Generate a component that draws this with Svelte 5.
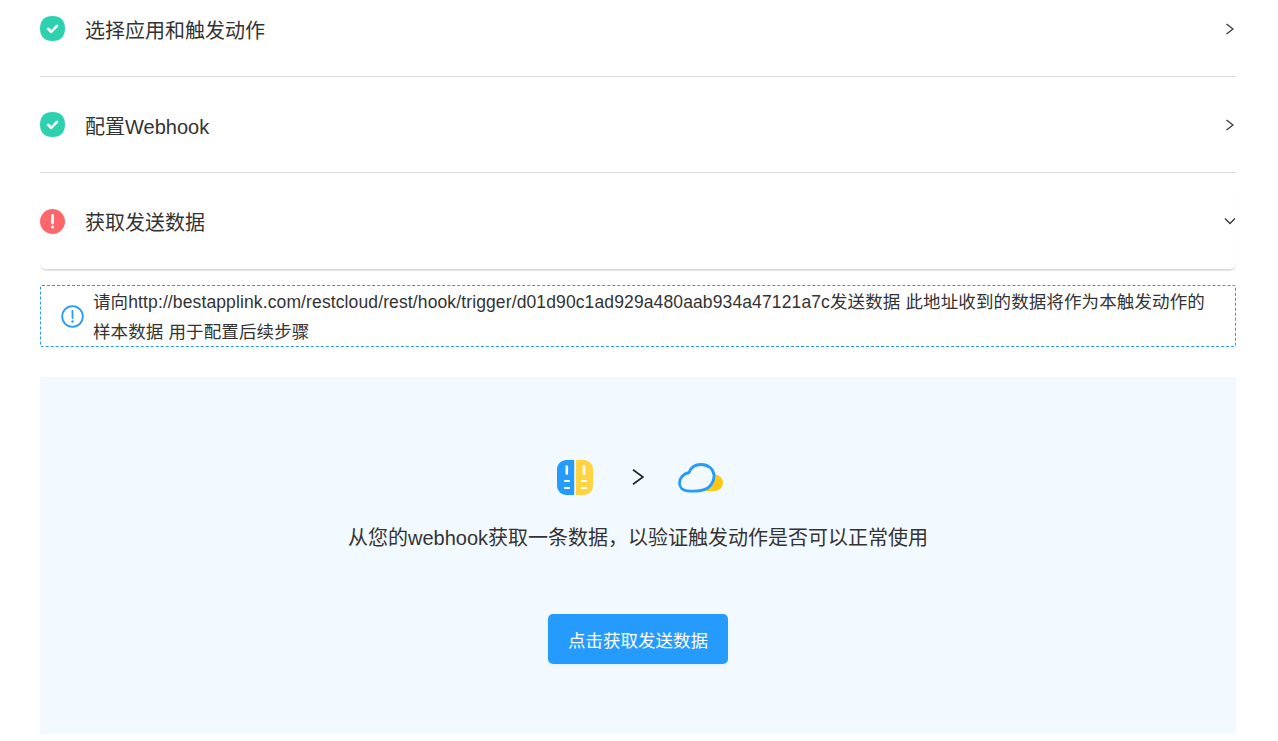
<script>
  const steps = [
    { title: "选择应用和触发动作", state: "ok", open: false },
    { title: "配置Webhook", state: "ok", open: false },
    { title: "获取发送数据", state: "err", open: true }
  ]
</script>

<div class="page">
  {#each steps as step}
    <div class="step" class:open={step.open}>
      {#if step.state === "ok"}
        <svg class="status" width="25" height="25" viewBox="0 0 25 25">
          <path d="M12.500 0C20.500 0 25 4.500 25 12.500S20.500 25 12.500 25 0 20.500 0 12.500 4.500 0 12.500 0z" fill="#2dd1ae" />
          <path d="M8 12.800l3.200 3 5.800-6" fill="none" stroke="#fff" stroke-width="2.600" stroke-linecap="round" stroke-linejoin="round" />
        </svg>
      {:else}
        <svg class="status" width="25" height="25" viewBox="0 0 25 25">
          <circle cx="12.500" cy="12.500" r="12.500" fill="#ff666b" />
          <path d="M12.500 6.500v7.500" stroke="#fff" stroke-width="2.800" stroke-linecap="round" />
          <circle cx="12.500" cy="18" r="1.600" fill="#fff" />
        </svg>
      {/if}
      <span class="title">{step.title}</span>
      <svg class="arrow" width="12" height="12" viewBox="0 0 12 12">
        {#if step.open}
          <path d="M1 3.500l5 5 5-5" fill="none" stroke="#333" stroke-width="1.300" />
        {:else}
          <path d="M2.500 1l6.500 5-6.500 5" fill="none" stroke="#333" stroke-width="1.200" />
        {/if}
      </svg>
    </div>
  {/each}

  <div class="notice">
    <svg class="notice-icon" width="23" height="23" viewBox="0 0 23 23">
      <circle cx="11.500" cy="11.500" r="10.300" fill="none" stroke="#259bfd" stroke-width="1.800" />
      <path d="M11.500 6v7" stroke="#259bfd" stroke-width="1.800" stroke-linecap="round" />
      <circle cx="11.500" cy="16.500" r="1.200" fill="#259bfd" />
    </svg>
    <p>请向http://bestapplink.com/restcloud/rest/hook/trigger/d01d90c1ad929a480aab934a47121a7c发送数据 此地址收到的数据将作为本触发动作的样本数据 用于配置后续步骤</p>
  </div>

  <div class="panel">
    <div class="logos">
      <svg width="36" height="36" viewBox="0 0 36 36">
        <path d="M17.200 0v35H9a9 9 0 0 1-9-9V9a9 9 0 0 1 9-9z" fill="#259bfd" />
        <path d="M18.800 0H27a9 9 0 0 1 9 9v17a9 9 0 0 1-9 9h-8.200z" fill="#ffd342" />
        <path d="M9.800 6.500v7M27 6.500v7" stroke="#fff" stroke-width="2.600" stroke-linecap="round" />
        <path d="M8 21h4M8 28h4M25 21h4M25 28h4" stroke="#fff" stroke-width="2.200" stroke-linecap="round" />
      </svg>
      <svg class="next" width="12" height="16" viewBox="0 0 12 16">
        <path d="M1 .8l10 7.200-10 7.200" fill="none" stroke="#222" stroke-width="1.700" />
      </svg>
      <svg class="cloud" width="45" height="30" viewBox="0 0 45 30">
        <path d="M36 11c5 1 9 4 9 8.500 0 5-4 8.500-9 8.500H24c6-2 12-8 12-17z" fill="#fdc713" />
        <path d="M11 9.500C13 4 18 1.500 23 1.500c7 0 12.500 4.500 13 10.500.4 6-3.500 14-13 15.500-3 .5-10 .8-14 .3C4.500 27.300 1.500 24 1.500 20c0-5 4-9.500 9.500-10.500z" fill="#f3faff" stroke="#259bfd" stroke-width="2.800" />
      </svg>
    </div>
    <p class="desc">从您的webhook获取一条数据，以验证触发动作是否可以正常使用</p>
    <button type="button">点击获取发送数据</button>
  </div>
</div>

<style>
  :global(body) {
    margin: 0;
    background: #fff;
    font-family: "Liberation Sans", "Noto Sans CJK SC", sans-serif;
    color: #333;
  }
  .page {
    padding: 0 42px 0 40px;
    height: 741px;
    box-sizing: border-box;
    overflow: hidden;
  }
  .step {
    display: flex;
    align-items: center;
    height: 77px;
    margin-bottom: 19px;
    padding-bottom: 19px;
    box-sizing: border-box;
    border-bottom: 1px solid #dcdcdc;
  }
  .step.open {
    height: 78px;
    margin-bottom: 15px;
    border-radius: 0 0 6px 6px;
    box-shadow: 0 1px 1px #e4e4e4;
  }
  .status {
    flex: none;
    margin-right: 20px;
  }
  .title {
    flex: 1;
    font-size: 20px;
    line-height: 28px;
    padding-top: 4px;
    color: #333;
  }
  .arrow {
    flex: none;
  }
  .notice {
    display: flex;
    align-items: center;
    box-sizing: border-box;
    height: 62px;
    border: 1px dashed #259bfd;
    border-radius: 2px;
    padding: 0 20px;
  }
  .notice-icon {
    flex: none;
    margin-right: 9px;
  }
  .notice p {
    margin: 0;
    padding-top: 2px;
    font-size: 17.500px;
    line-height: 30px;
    letter-spacing: 0.12px;
    color: #333;
  }
  .panel {
    margin-top: 30px;
    height: 357px;
    background: #f3faff;
    display: flex;
    flex-direction: column;
    align-items: center;
    padding-top: 83px;
    box-sizing: border-box;
  }
  .logos {
    display: flex;
    align-items: center;
    height: 36px;
    margin-left: 4px;
  }
  .next {
    margin: 0 34px 2px 39px;
  }
  .desc {
    margin: 28px 0 0;
    font-size: 20px;
    line-height: 28px;
    color: #333;
  }
  button {
    margin-top: 62px;
    width: 180px;
    height: 50px;
    border: none;
    border-radius: 5px;
    background: #259bfd;
    color: #fff;
    font-family: inherit;
    font-size: 17.500px;
    box-shadow: 0 2px 4px rgba(37, 155, 253, 0.08);
  }
</style>
